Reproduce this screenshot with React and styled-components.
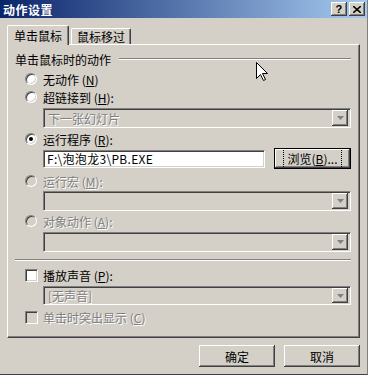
import React from "react";
import styled, { createGlobalStyle, css } from "styled-components";

const GlobalStyle = createGlobalStyle`
  html, body {
    margin: 0;
    padding: 0;
    background: #d4d0c8;
  }
  body {
    font-family: "SimSun", "Noto Sans CJK SC", sans-serif;
    font-size: 12px;
    color: #000;
  }
`;

const raised = css`
  background: #d4d0c8;
  box-shadow: inset -1px -1px #404040, inset 1px 1px #ffffff,
    inset -2px -2px #808080, inset 2px 2px #d4d0c8;
`;

const sunken = css`
  border: 1px solid;
  border-color: #808080 #ffffff #ffffff #808080;
  box-shadow: inset 1px 1px #404040, inset -1px -1px #d4d0c8;
`;

const Window = styled.div`
  position: relative;
  width: 368px;
  height: 375px;
  box-sizing: border-box;
  background: #d4d0c8;
  border-right: 1px solid #808080;
  border-bottom: 1px solid #404040;
  display: flex;
  flex-direction: column;
`;

const TitleBar = styled.div`
  height: 18px;
  display: flex;
  align-items: center;
  padding: 0 2px 0 3px;
  background: linear-gradient(to right, #0a246a, #a6caf0);
  color: #fff;
  font-weight: bold;
  font-size: 12px;
  letter-spacing: 0.5px;
`;

const TitleButtons = styled.div`
  margin-left: auto;
  display: flex;
  gap: 2px;
`;

const TitleButton = styled.div`
  ${raised};
  width: 16px;
  height: 14px;
  display: flex;
  align-items: center;
  justify-content: center;
  color: #000;
  font-family: "Liberation Sans", sans-serif;
  font-size: 11px;
  font-weight: bold;
  line-height: 1;
`;

const Body = styled.div`
  flex: 1;
  display: flex;
  flex-direction: column;
  padding: 7px 7px 0 7px;
`;

const TabStrip = styled.div`
  display: flex;
  align-items: flex-end;
  height: 19px;
  gap: 2px;
`;

const Tab = styled.div`
  position: relative;
  box-sizing: border-box;
  height: ${(p) => (p.$active ? 20 : 16)}px;
  margin-bottom: ${(p) => (p.$active ? -1 : 0)}px;
  padding: 0 ${(p) => (p.$active ? 6 : 5)}px;
  z-index: ${(p) => (p.$active ? 1 : 0)};
  display: flex;
  align-items: center;
  background: #d4d0c8;
  border-top: 1px solid #fff;
  border-left: 1px solid #fff;
  border-right: 1px solid #404040;
  border-radius: 2px 2px 0 0;
  box-shadow: inset -1px 0 #808080;
`;

const Panel = styled.div`
  box-sizing: border-box;
  height: 294px;
  display: flex;
  flex-direction: column;
  padding: 7px 8px 0 7px;
  border: 1px solid;
  border-color: #fff #404040 #404040 #fff;
  box-shadow: inset -1px -1px #808080;
`;

const Heading = styled.div`
  height: 14px;
  display: flex;
  align-items: center;
`;

const HeadingLine = styled.div`
  flex: 1;
  margin-left: 8px;
  border-top: 1px solid #808080;
  border-bottom: 1px solid #fff;
`;

const Options = styled.div`
  display: flex;
  flex-direction: column;
  padding-left: 10px;
`;

const OptionRow = styled.label`
  height: 18px;
  margin-top: ${(p) => p.$mt || 0}px;
  display: flex;
  align-items: center;
  gap: ${(p) => (p.$check ? 5 : 6)}px;
  color: ${(p) => (p.$disabled ? "#808080" : "#000")};
  text-shadow: ${(p) => (p.$disabled ? "1px 1px #fff" : "none")};
`;

const Radio = styled.span`
  position: relative;
  box-sizing: border-box;
  width: 12px;
  height: 12px;
  border-radius: 50%;
  ${sunken};
  background: ${(p) => (p.$disabled ? "#d4d0c8" : "#fff")};
  flex: none;

  &::after {
    content: "";
    display: ${(p) => (p.$checked ? "block" : "none")};
    position: absolute;
    left: 3px;
    top: 3px;
    width: 4px;
    height: 4px;
    border-radius: 50%;
    background: #000;
  }
`;

const Check = styled.span`
  box-sizing: border-box;
  width: 13px;
  height: 13px;
  ${sunken};
  background: ${(p) => (p.$disabled ? "#d4d0c8" : "#fff")};
  flex: none;
`;

const Combo = styled.div`
  box-sizing: border-box;
  height: ${(p) => p.$h || 20}px;
  margin: ${(p) => p.$mt || 0}px 0 0 18px;
  display: flex;
  align-items: center;
  padding: 0 2px 0 4px;
  ${sunken};
  background: #d4d0c8;
  color: #808080;
  text-shadow: 1px 1px #fff;
`;

const ComboText = styled.span`
  flex: 1;
`;

const DropButton = styled.span`
  ${raised};
  width: 16px;
  height: ${(p) => p.$h || 16}px;
  display: flex;
  align-items: center;
  justify-content: center;
`;

const FieldRow = styled.div`
  height: 21px;
  margin-left: 18px;
  display: flex;
  align-items: center;
  gap: 9px;
`;

const TextInput = styled.div`
  box-sizing: border-box;
  flex: 1;
  height: 18px;
  display: flex;
  align-items: center;
  padding-left: 3px;
  ${sunken};
  background: #fff;
  letter-spacing: 0.3px;
`;

const Button = styled.div`
  box-sizing: border-box;
  width: ${(p) => p.$w || 76}px;
  height: ${(p) => p.$h || 22}px;
  display: flex;
  align-items: center;
  justify-content: center;
  ${raised};
  ${(p) =>
    p.$focused &&
    css`
      border: 1px solid #000;
      box-shadow: inset -1px -1px #404040, inset 1px 1px #ffffff,
        inset -2px -2px #808080;
      span {
        outline: 1px dotted #000;
        padding: 1px 3px;
      }
    `}
`;

const Separator = styled.div`
  margin-top: ${(p) => p.$mt || 0}px;
  border-top: 1px solid #808080;
  border-bottom: 1px solid #fff;
`;

const Footer = styled.div`
  margin-top: 7px;
  display: flex;
  justify-content: flex-end;
  gap: 9px;
`;

const Cursor = styled.svg`
  position: absolute;
  left: 256px;
  top: 62px;
`;

const Arrow = () => (
  <svg width="7" height="4" viewBox="0 0 7 4">
    <path d="M0 0h7L3.5 4z" fill="#808080" />
  </svg>
);

const Key = ({ k }) => (
  <span>
    {" "}(<u>{k}</u>)
  </span>
);

export default function App() {
  return (
    <>
      <GlobalStyle />
      <Window>
        <TitleBar>
          动作设置
          <TitleButtons>
            <TitleButton>?</TitleButton>
            <TitleButton>
              <svg width="8" height="7" viewBox="0 0 8 7">
                <path d="M0 0l8 7M8 0L0 7" stroke="#000" strokeWidth="1.6" />
              </svg>
            </TitleButton>
          </TitleButtons>
        </TitleBar>
        <Body>
          <TabStrip>
            <Tab $active>单击鼠标</Tab>
            <Tab>鼠标移过</Tab>
          </TabStrip>
          <Panel>
            <Heading>
              单击鼠标时的动作
              <HeadingLine />
            </Heading>
            <Options>
              <OptionRow $mt={4}>
                <Radio />
                <span>
                  无动作
                  <Key k="N" />
                </span>
              </OptionRow>
              <OptionRow>
                <Radio />
                <span>
                  超链接到
                  <Key k="H" />:
                </span>
              </OptionRow>
              <Combo $mt={2}>
                <ComboText>下一张幻灯片</ComboText>
                <DropButton>
                  <Arrow />
                </DropButton>
              </Combo>
              <OptionRow $mt={2}>
                <Radio $checked />
                <span>
                  运行程序
                  <Key k="R" />:
                </span>
              </OptionRow>
              <FieldRow>
                <TextInput>F:\泡泡龙3\PB.EXE</TextInput>
                <Button $focused $w={77} $h={21}>
                  <span>
                    浏览(<u>B</u>)...
                  </span>
                </Button>
              </FieldRow>
              <OptionRow $mt={3} $disabled>
                <Radio $disabled />
                <span>
                  运行宏
                  <Key k="M" />:
                </span>
              </OptionRow>
              <Combo $mt={1}>
                <ComboText />
                <DropButton>
                  <Arrow />
                </DropButton>
              </Combo>
              <OptionRow $mt={1} $disabled>
                <Radio $disabled />
                <span>
                  对象动作
                  <Key k="A" />:
                </span>
              </OptionRow>
              <Combo $mt={2}>
                <ComboText />
                <DropButton>
                  <Arrow />
                </DropButton>
              </Combo>
            </Options>
            <Separator $mt={7} />
            <Options>
              <OptionRow $mt={5} $check>
                <Check />
                <span>
                  播放声音
                  <Key k="P" />:
                </span>
              </OptionRow>
              <Combo $mt={2} $h={19}>
                <ComboText>[无声音]</ComboText>
                <DropButton $h={15}>
                  <Arrow />
                </DropButton>
              </Combo>
              <OptionRow $mt={3} $check $disabled>
                <Check $disabled />
                <span>
                  单击时突出显示
                  <Key k="C" />
                </span>
              </OptionRow>
            </Options>
          </Panel>
          <Footer>
            <Button>确定</Button>
            <Button>取消</Button>
          </Footer>
        </Body>
        <Cursor width="13" height="20" viewBox="0 0 13 20">
          <path
            d="M0.5 0.5V16.5L4.5 12.5L7.5 18.5L9.5 17.5L6.5 11.5H11.5Z"
            fill="#fff"
            stroke="#000"
            strokeWidth="1"
          />
        </Cursor>
      </Window>
    </>
  );
}
